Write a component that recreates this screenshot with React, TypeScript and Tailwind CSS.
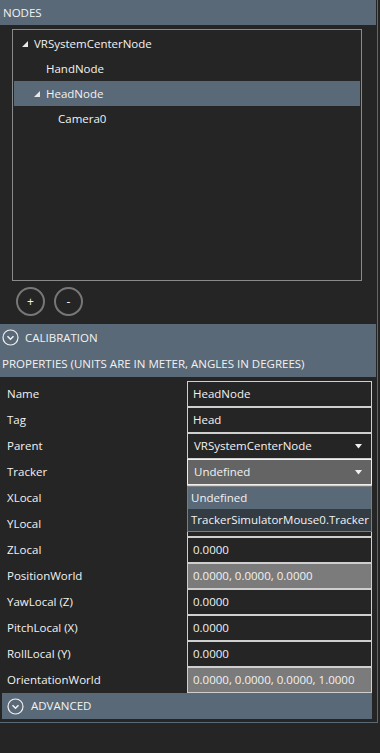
import React from "react";

type INodeRow = {
  name: string;
  depth: number;
  expanded?: boolean;
  selected?: boolean;
};

type IPropRow = {
  label: string;
  value: string;
  kind?: "text" | "readonly" | "select" | "select-open";
};

const nodes: INodeRow[] = [
  { name: "VRSystemCenterNode", depth: 0, expanded: true },
  { name: "HandNode", depth: 1 },
  { name: "HeadNode", depth: 1, expanded: true, selected: true },
  { name: "Camera0", depth: 2 },
];

// XLocal / YLocal values sit under the open Tracker list, so they show nothing
const props: IPropRow[] = [
  { label: "Name", value: "HeadNode" },
  { label: "Tag", value: "Head" },
  { label: "Parent", value: "VRSystemCenterNode", kind: "select" },
  { label: "Tracker", value: "Undefined", kind: "select-open" },
  { label: "XLocal", value: "" },
  { label: "YLocal", value: "" },
  { label: "ZLocal", value: "0.0000" },
  { label: "PositionWorld", value: "0.0000, 0.0000, 0.0000", kind: "readonly" },
  { label: "YawLocal (Z)", value: "0.0000" },
  { label: "PitchLocal (X)", value: "0.0000" },
  { label: "RollLocal (Y)", value: "0.0000" },
  { label: "OrientationWorld", value: "0.0000, 0.0000, 0.0000, 1.0000", kind: "readonly" },
];

const Expander = () => (
  <svg width="6" height="6" viewBox="0 0 6 6" className="shrink-0">
    <polygon points="6,0 6,6 0,6" fill="#e8e8e8" />
  </svg>
);

const CircleChevron = () => (
  <svg width="17" height="17" viewBox="0 0 17 17" className="shrink-0">
    <circle cx="8.5" cy="8.5" r="7.5" fill="none" stroke="#f0f0f0" strokeWidth="1.2" />
    <polyline points="5.5,7.2 8.5,10.2 11.5,7.2" fill="none" stroke="#f0f0f0" strokeWidth="1.6" />
  </svg>
);

const DropArrow = () => (
  <svg width="7" height="5" viewBox="0 0 7 5" className="shrink-0">
    <polygon points="0,0 7,0 3.5,4.5" fill="#f0f0f0" />
  </svg>
);

const TreeRow = ({ name, depth, expanded, selected }: INodeRow) => {
  const pad = ["pl-[8px]", "pl-[20px]", "pl-[32px]"][depth];
  return (
    <div
      className={`flex h-[25px] items-center ${pad} ${selected ? "bg-[#5a6977]" : ""}`}
    >
      <div className="flex w-[12px] items-center">{expanded ? <Expander /> : null}</div>
      <span>{name}</span>
    </div>
  );
};

const PropField = ({ value, kind = "text" }: IPropRow) => {
  if (kind === "readonly") {
    return (
      <div className="flex h-[26px] items-center border border-[#cfcfcf] bg-[#7b7b7b] px-[5px]">
        {value}
      </div>
    );
  }
  if (kind === "select" || kind === "select-open") {
    const open = kind === "select-open";
    return (
      <div className="relative">
        <div
          className={`flex h-[26px] items-center justify-between border pl-[6px] pr-[9px] ${
            open ? "border-[#efefef] bg-[#646464]" : "border-[#cfcfcf] bg-[#252525]"
          }`}
        >
          <span>{value}</span>
          <DropArrow />
        </div>
        {open ? (
          <div className="absolute left-0 top-[27px] z-10 w-full border border-[#7d7d7d] bg-[#333b43]">
            <div className="flex h-[22px] items-center bg-[#5a6977] px-[3px]">Undefined</div>
            <div className="flex h-[22px] items-center px-[3px]">TrackerSimulatorMouse0.Tracker</div>
          </div>
        ) : null}
      </div>
    );
  }
  return (
    <div className="flex h-[26px] items-center border border-[#cfcfcf] bg-[#252525] px-[5px]">
      {value}
    </div>
  );
};

export default function App() {
  return (
    <div
      className="min-h-screen w-full bg-[#252525] text-[11.5px] text-[#f2f2f2]"
      style={{ fontFamily: "'Open Sans', 'Noto Sans', sans-serif" }}
    >
      <div className="h-[723px] w-[378px] border-b border-r border-[#5a6977]">
        <div className="mr-px flex h-[25px] items-center bg-[#5a6977] px-[3px]">NODES</div>

        <div className="ml-[12px] mt-[4px] h-[252px] w-[350px] border border-[#8a8a8a] p-px">
          {nodes.map((n) => (
            <TreeRow key={n.name} {...n} />
          ))}
        </div>

        <div className="ml-[16px] mt-[6px] flex gap-[9px]">
          {["+", "-"].map((s) => (
            <div
              key={s}
              className="flex h-[29px] w-[29px] items-center justify-center rounded-full border-2 border-[#777777] text-[12px]"
            >
              {s}
            </div>
          ))}
        </div>

        <div className="mr-px mt-[8px] bg-[#5a6977]">
          <div className="flex h-[27px] items-center gap-[6px] px-[2px]">
            <CircleChevron />
            <span>CALIBRATION</span>
          </div>
          <div className="flex h-[26px] items-center px-[2px]">
            PROPERTIES (UNITS ARE IN METER, ANGLES IN DEGREES)
          </div>
        </div>

        <div className="ml-[2px] mr-[5px] mt-[4px]">
          {props.map((p) => (
            <div key={p.label} className="grid grid-cols-[185px_1fr]">
              <div className="flex h-[26px] items-center pl-[5px]">{p.label}</div>
              <PropField {...p} />
            </div>
          ))}
          <div className="flex h-[26px] items-center gap-[7px] bg-[#5a6977] px-[5px]">
            <CircleChevron />
            <span>ADVANCED</span>
          </div>
        </div>
      </div>
    </div>
  );
}
